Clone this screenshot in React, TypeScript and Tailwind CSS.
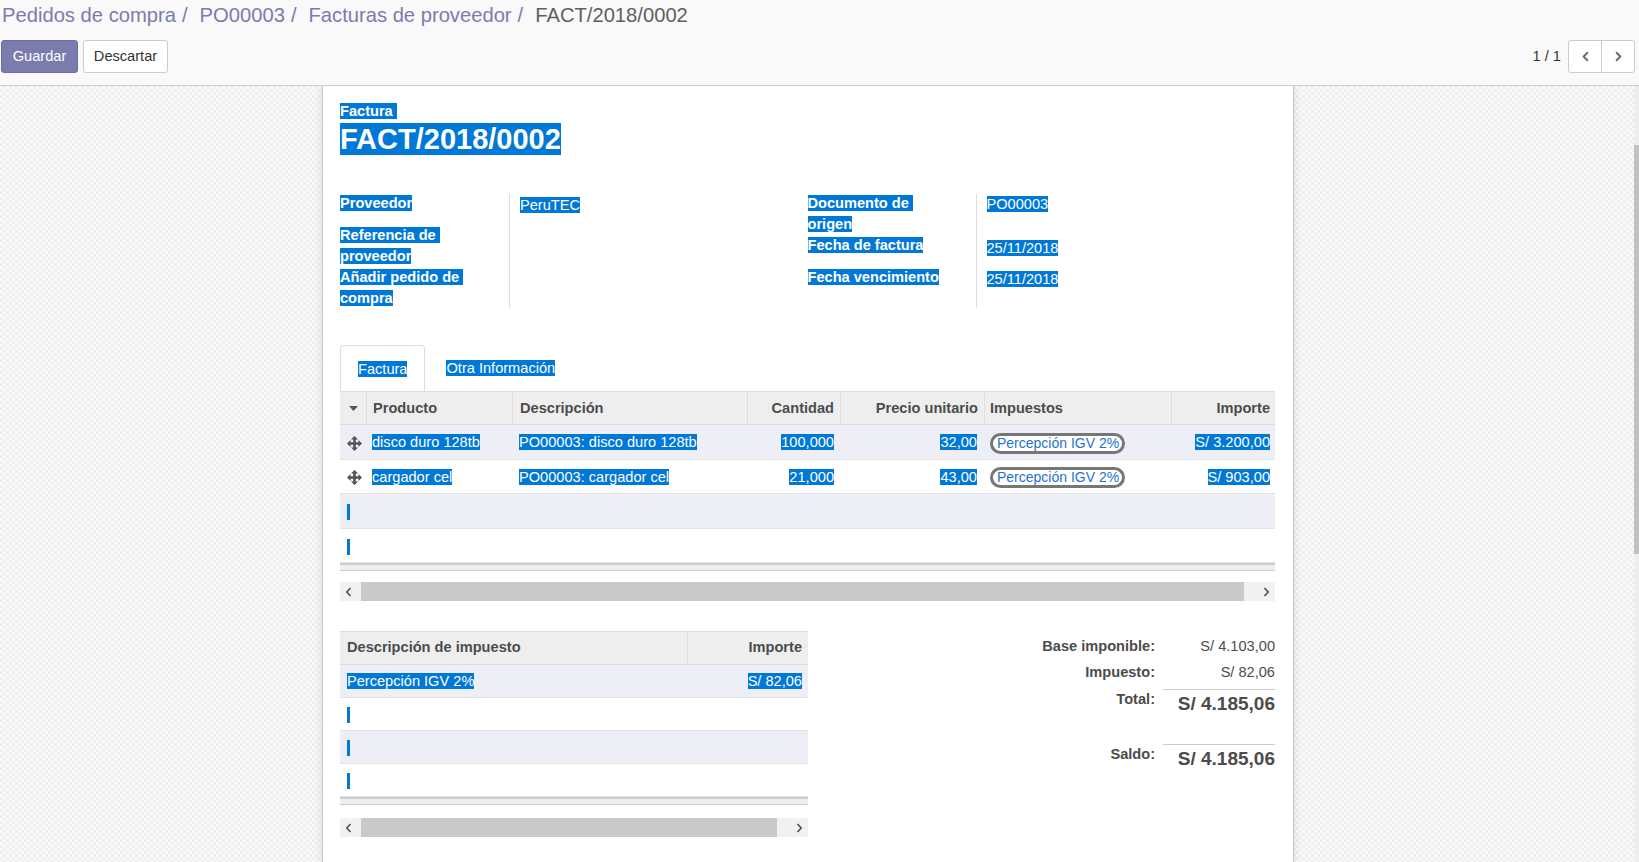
import React from 'react';
import { ChevronLeft, ChevronRight } from 'lucide-react';

const Sel: React.FC<{ children: React.ReactNode }> = ({ children }) => (
  <span className="bg-[#0078d7] text-white">{children}</span>
);

const Cursor: React.FC = () => <span className="block w-[3px] h-[16px] bg-[#0078d7]" />;

const MoveIcon: React.FC = () => (
  <svg width="15" height="15" viewBox="0 0 16 16" fill="#555">
    <path d="M8 0 L11.8 3.8 H9.4 V6.6 H12.2 V4.2 L16 8 L12.2 11.8 V9.4 H9.4 V12.2 H11.8 L8 16 L4.2 12.2 H6.6 V9.4 H3.8 V11.8 L0 8 L3.8 4.2 V6.6 H6.6 V3.8 H4.2 Z" />
  </svg>
);

const Arrow: React.FC<{ dir: 'left' | 'right' }> = ({ dir }) => (
  <svg width="7" height="10" viewBox="0 0 7 10">
    <path
      d={dir === 'left' ? 'M5.5 1 L1.8 5 L5.5 9' : 'M1.5 1 L5.2 5 L1.5 9'}
      stroke="#505050"
      strokeWidth="1.6"
      fill="none"
    />
  </svg>
);

const HScroll: React.FC<{ thumb: string }> = ({ thumb }) => (
  <div className="flex h-[19px] bg-[#f1f1f1]">
    <div className="w-[17px] flex items-center justify-center">
      <Arrow dir="left" />
    </div>
    <div className="flex-1 flex">
      <div className={`ml-[4px] bg-[#c9c9c9] ${thumb}`} />
    </div>
    <div className="w-[17px] flex items-center justify-center">
      <Arrow dir="right" />
    </div>
  </div>
);

const TFoot: React.FC = () => (
  <div className="border-t-2 border-b border-[#cccccc] h-[8px] bg-[#eeeeee]" />
);

const COLS = 'grid grid-cols-[26px_146px_235px_93px_144px_187px_104px]';

const lines = [
  { product: 'disco duro 128tb', desc: 'PO00003: disco duro 128tb', qty: '100,000', price: '32,00', amount: 'S/ 3.200,00' },
  { product: 'cargador cel', desc: 'PO00003: cargador cel', qty: '21,000', price: '43,00', amount: 'S/ 903,00' },
];

const rowBg = ['bg-[#eeeef7]', 'bg-white', 'bg-[#eeeef7]', 'bg-white'];
const rowH = ['h-[35px]', 'h-[34px]', 'h-[35px]', 'h-[34px]'];

const Slash: React.FC = () => <span className="text-[#7c7bad] pl-[6px] pr-[12px]">/</span>;

const ControlPanel: React.FC = () => (
  <div className="h-[86px] shrink-0 bg-[#f9f9f9] border-b border-[#cccccc] pt-[1px]">
    <div className="flex h-[28px] leading-[28px] text-[20.2px] pl-[2px] whitespace-nowrap">
      <span className="text-[#7c7bad]">Pedidos de compra</span>
      <Slash />
      <span className="text-[#7c7bad]">PO00003</span>
      <Slash />
      <span className="text-[#7c7bad]">Facturas de proveedor</span>
      <Slash />
      <span className="text-[#5f5f5f]">FACT/2018/0002</span>
    </div>
    <div className="mt-[11px] flex items-center justify-between pl-[1px] pr-[4px]">
      <div className="flex gap-[5px]">
        <button className="h-[33px] w-[77px] rounded-[3px] bg-[#7c7bad] border border-[#6f6ea2] text-white">
          Guardar
        </button>
        <button className="h-[33px] w-[85px] rounded-[3px] bg-white border border-[#cccccc] text-[#333]">
          Descartar
        </button>
      </div>
      <div className="flex items-center">
        <span className="text-[#333] mr-[7px]">1 / 1</span>
        <div className="flex h-[33px] border border-[#cccccc] rounded-[3px] bg-white">
          <button className="w-[33px] flex items-center justify-center border-r border-[#cccccc]">
            <ChevronLeft size={15} strokeWidth={3} color="#6b6b6b" />
          </button>
          <button className="w-[32px] flex items-center justify-center">
            <ChevronRight size={15} strokeWidth={3} color="#6b6b6b" />
          </button>
        </div>
      </div>
    </div>
  </div>
);

const Groups: React.FC = () => (
  <div className="mt-[37px] grid grid-cols-2 leading-[21px]">
    <div className="flex">
      <div className="w-[169px] flex flex-col font-bold">
        <div className="h-[32px]"><Sel>Proveedor</Sel></div>
        <div className="h-[42px]"><Sel>Referencia de&nbsp;</Sel><br /><Sel>proveedor</Sel></div>
        <div className="h-[42px]"><Sel>Añadir pedido de&nbsp;</Sel><br /><Sel>compra</Sel></div>
      </div>
      <div className="mt-[1px] mb-[1px] border-l border-[#dddddd] pl-[10px] flex flex-col">
        <div className="h-[32px] pt-[1px]"><Sel>PeruTEC</Sel></div>
      </div>
    </div>
    <div className="flex">
      <div className="w-[168px] flex flex-col font-bold">
        <div className="h-[42px]"><Sel>Documento de&nbsp;</Sel><br /><Sel>origen</Sel></div>
        <div className="h-[32px]"><Sel>Fecha de factura</Sel></div>
        <div className="h-[42px]"><Sel>Fecha vencimiento</Sel></div>
      </div>
      <div className="mt-[1px] mb-[1px] border-l border-[#dddddd] pl-[10px] flex flex-col">
        <div className="h-[41px]"><Sel>PO00003</Sel></div>
        <div className="h-[32px] pt-[3px]"><Sel>25/11/2018</Sel></div>
        <div className="h-[32px] pt-[2px]"><Sel>25/11/2018</Sel></div>
      </div>
    </div>
  </div>
);

const LinesTable: React.FC = () => (
  <div>
    <div className={`${COLS} h-[34px] bg-[#eeeeee] border-y border-[#dddddd] font-bold items-center`}>
      <div className="flex justify-center">
        <svg width="9" height="5" viewBox="0 0 9 5"><path d="M0 0 H9 L4.5 5 Z" fill="#555" /></svg>
      </div>
      <div className="h-full flex items-center pt-[1px] border-l border-[#dddddd] px-[6px]">Producto</div>
      <div className="h-full flex items-center pt-[1px] border-l border-[#dddddd] px-[7px]">Descripción</div>
      <div className="h-full flex items-center pt-[1px] justify-end border-l border-[#dddddd] px-[6px]">Cantidad</div>
      <div className="h-full flex items-center pt-[1px] justify-end border-l border-[#dddddd] px-[6px]">Precio unitario</div>
      <div className="h-full flex items-center pt-[1px] border-l border-[#dddddd] px-[5px]">Impuestos</div>
      <div className="h-full flex items-center pt-[1px] justify-end border-l border-[#dddddd] px-[5px]">Importe</div>
    </div>
    {[0, 1, 2, 3].map((i) => {
      const l = lines[i];
      return (
        <div key={i} className={`${COLS} ${rowH[i]} ${rowBg[i]} border-b border-[#e2e2e2] items-center pt-[2px]`}>
          {l ? (
            <>
              <div className="flex justify-center pl-[2px]"><MoveIcon /></div>
              <div className="px-[6px] whitespace-nowrap"><Sel>{l.product}</Sel></div>
              <div className="px-[7px] whitespace-nowrap"><Sel>{l.desc}</Sel></div>
              <div className="px-[6px] text-right"><Sel>{l.qty}</Sel></div>
              <div className="px-[7px] text-right"><Sel>{l.price}</Sel></div>
              <div className="px-[6px] flex">
                <span className="rounded-full border-[3px] border-[#777777] bg-white text-[#1e73d0] text-[14px] pl-[4px] pr-[3px] leading-[15px]">
                  Percepción IGV 2%
                </span>
              </div>
              <div className="px-[5px] text-right whitespace-nowrap"><Sel>{l.amount}</Sel></div>
            </>
          ) : (
            <div className="pl-[7px]"><Cursor /></div>
          )}
        </div>
      );
    })}
    <TFoot />
  </div>
);

const TaxTable: React.FC = () => (
  <div className="w-[468px]">
    <div className="grid grid-cols-[347px_121px] h-[34px] bg-[#eeeeee] border-y border-[#dddddd] font-bold">
      <div className="flex items-center px-[7px]">Descripción de impuesto</div>
      <div className="flex items-center justify-end border-l border-[#dddddd] px-[6px]">Importe</div>
    </div>
    {[0, 1, 2, 3].map((i) => (
      <div key={i} className={`grid grid-cols-[347px_121px] h-[33px] ${rowBg[i]} border-b border-[#e2e2e2] items-center pt-[2px]`}>
        {i === 0 ? (
          <>
            <div className="px-[7px]"><Sel>Percepción IGV 2%</Sel></div>
            <div className="px-[6px] text-right"><Sel>S/ 82,06</Sel></div>
          </>
        ) : (
          <div className="pl-[7px]"><Cursor /></div>
        )}
      </div>
    ))}
    <TFoot />
    <div className="mt-[13px]">
      <HScroll thumb="w-[416px] h-full" />
    </div>
  </div>
);

const Totals: React.FC = () => (
  <div className="flex justify-end">
    <div className="grid grid-cols-[auto_112px] gap-x-[8px] content-start pt-[5px] leading-[20px]">
      <div className="h-[26px] text-right font-bold">Base imponible:</div>
      <div className="h-[26px] text-right">S/ 4.103,00</div>
      <div className="h-[27px] text-right font-bold">Impuesto:</div>
      <div className="h-[27px] text-right">S/ 82,06</div>
      <div className="h-[27px] text-right font-bold">Total:</div>
      <div className="h-[27px] text-right border-t border-[#cccccc] text-[19px] font-bold leading-[27px]">S/ 4.185,06</div>
      <div className="col-span-2 h-[28px]" />
      <div className="h-[27px] text-right font-bold">Saldo:</div>
      <div className="h-[27px] text-right border-t border-[#cccccc] text-[19px] font-bold leading-[27px]">S/ 4.185,06</div>
    </div>
  </div>
);

const Sheet: React.FC = () => (
  <div className="w-[972px] bg-white border-x border-[#c8c8c8] shadow-[0_0_8px_rgba(0,0,0,0.12)] pt-[15px] pl-[17px] pr-[18px]">
    <div className="font-bold leading-[20px]"><Sel>Factura&nbsp;</Sel></div>
    <h1 className="mt-[1px] text-[29px] leading-[34px] font-bold"><Sel>FACT/2018/0002</Sel></h1>
    <Groups />
    <div className="mt-[36px] flex h-[46px]">
      <div className="border-x border-t border-[#dddddd] rounded-t-[4px] px-[17px] pt-[13px] leading-[20px] bg-white">
        <Sel>Factura</Sel>
      </div>
      <div className="ml-[4px] px-[17px] pt-[13px] leading-[20px]">
        <Sel>Otra Información</Sel>
      </div>
    </div>
    <LinesTable />
    <div className="mt-[11px]">
      <HScroll thumb="w-[883px] h-full" />
    </div>
    <div className="mt-[30px] grid grid-cols-2">
      <TaxTable />
      <Totals />
    </div>
  </div>
);

export default function App() {
  return (
    <div className="w-[1639px] h-[862px] flex flex-col overflow-hidden font-['Liberation_Sans',Arial,sans-serif] text-[14.6px] text-[#4c4c4c]">
      <ControlPanel />
      <div className="flex-1 min-h-0 flex">
        <div className="flex-1 flex overflow-hidden pl-[322px] bg-[#f5f5f5] bg-[image:repeating-conic-gradient(#efefef_0%_25%,#f9f9f9_0%_50%)] bg-[length:6px_6px]">
          <Sheet />
        </div>
        <div className="w-[5px] flex flex-col">
          <div className="h-[59px] bg-[#eeeeee]" />
          <div className="h-[409px] bg-[#c1c1c1]" />
          <div className="flex-1 bg-[#eeeeee]" />
        </div>
      </div>
    </div>
  );
}
